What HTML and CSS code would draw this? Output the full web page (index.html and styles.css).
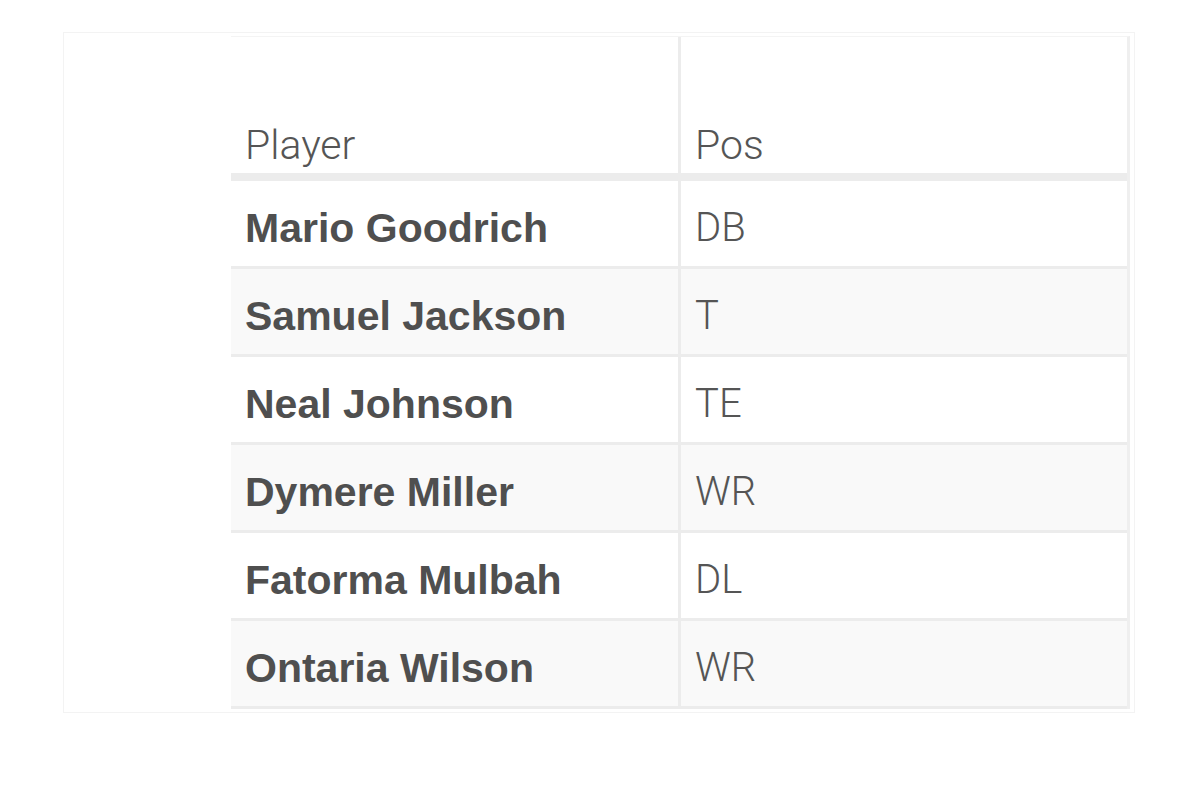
FILE: index.html
```html
<!DOCTYPE html>
<html>
<head>
<meta charset="utf-8">
<link rel="stylesheet" href="styles.css">
</head>
<body>
<div class="wrap">
  <table class="roster">
    <thead>
      <tr>
        <th class="c-player">Player</th>
        <th class="c-pos">Pos</th>
      </tr>
    </thead>
    <tbody>
      <tr><td class="c-player">Mario Goodrich</td><td class="c-pos">DB</td></tr>
      <tr><td class="c-player">Samuel Jackson</td><td class="c-pos">T</td></tr>
      <tr><td class="c-player">Neal Johnson</td><td class="c-pos">TE</td></tr>
      <tr><td class="c-player">Dymere Miller</td><td class="c-pos">WR</td></tr>
      <tr><td class="c-player">Fatorma Mulbah</td><td class="c-pos">DL</td></tr>
      <tr><td class="c-player">Ontaria Wilson</td><td class="c-pos">WR</td></tr>
    </tbody>
  </table>
</div>
</body>
</html>
```
FILE: styles.css
```css
html, body {
  margin: 0;
  padding: 0;
  background: #ffffff;
}

body {
  font-family: Roboto, "Liberation Sans", sans-serif;
  color: #555555;
}

.wrap {
  box-sizing: border-box;
  margin: 32px 0 0 63px;
  width: 1072px;
  height: 681px;
  border: 1px solid #f3f3f3;
  padding: 3px 5px 0 167px;
}

.roster {
  border-collapse: separate;
  border-spacing: 0;
  width: 899px;
  border-top: 1px solid #f4f4f4;
  border-right: 3px solid #efefef;
}

.roster th {
  box-sizing: border-box;
  height: 144px;
  padding: 0 14px 4px;
  vertical-align: bottom;
  text-align: left;
  font-weight: 300;
  font-size: 41px;
  line-height: 48px;
  color: #555555;
  border-bottom: 8px solid #ececec;
}

.roster td {
  box-sizing: border-box;
  height: 88px;
  padding: 8px 14px 0;
  vertical-align: middle;
  border-bottom: 3px solid #ececec;
  font-size: 40px;
  line-height: 48px;
}

.roster tbody tr:nth-child(even) td {
  background: #f9f9f9;
}

.roster .c-player {
  width: 450px;
  border-right: 3px solid #ececec;
}

.roster td.c-player {
  font-family: "Liberation Sans", Arial, sans-serif;
  font-size: 41px;
  font-weight: 700;
  color: #4f4f4f;
}

.roster td.c-pos {
  font-weight: 300;
  color: #555555;
}
```
